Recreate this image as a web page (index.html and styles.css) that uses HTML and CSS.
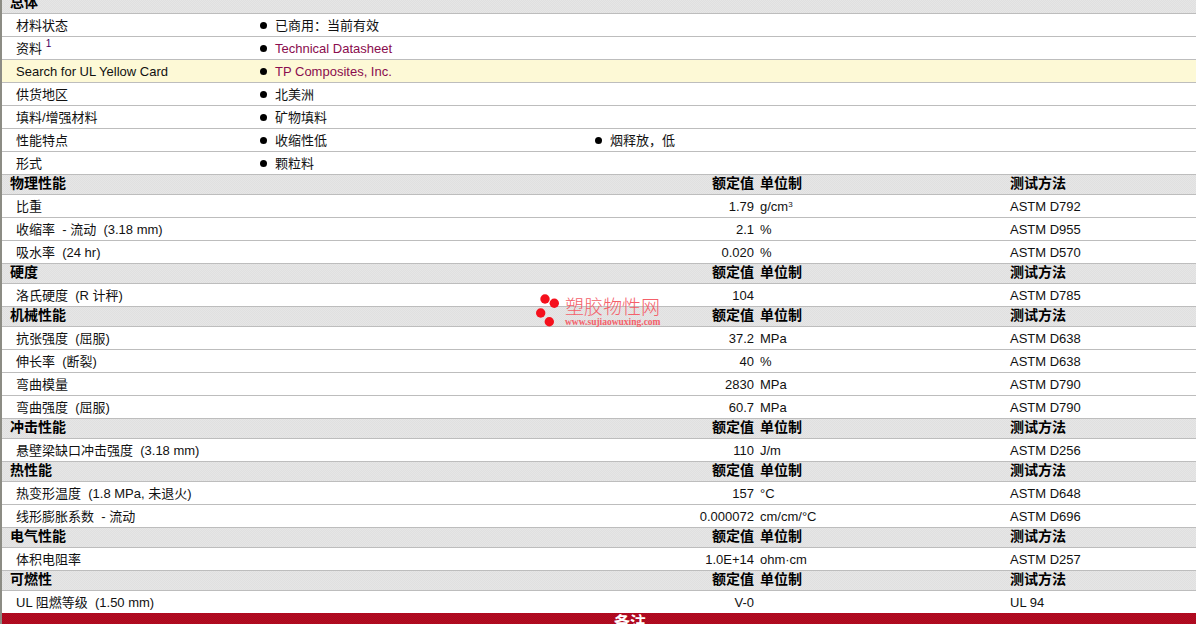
FILE: index.html
```html
<!DOCTYPE html>
<html lang="zh">
<head>
<meta charset="utf-8">
<title>塑胶物性</title>
<link rel="stylesheet" href="styles.css">
</head>
<body>
<main class="sheet">
  <div class="head head-first"><b class="title">总体</b></div>
  <div class="row info"><span class="label">材料状态</span><span class="item"><i class="dot"></i>已商用：当前有效</span></div>
  <div class="row info"><span class="label">资料 <sup class="note">1</sup></span><span class="item link"><i class="dot"></i>Technical Datasheet</span></div>
  <div class="row info yellow"><span class="label">Search for UL Yellow Card</span><span class="item link"><i class="dot"></i>TP Composites, Inc.</span></div>
  <div class="row info"><span class="label">供货地区</span><span class="item"><i class="dot"></i>北美洲</span></div>
  <div class="row info"><span class="label">填料/增强材料</span><span class="item"><i class="dot"></i>矿物填料</span></div>
  <div class="row info"><span class="label">性能特点</span><span class="item"><i class="dot"></i>收缩性低</span><span class="item"><i class="dot"></i>烟释放，低</span></div>
  <div class="row info"><span class="label">形式</span><span class="item"><i class="dot"></i>颗粒料</span></div>

  <div class="head"><b class="title">物理性能</b><b class="val">额定值</b><b>单位制</b><b>测试方法</b></div>
  <div class="row data"><span class="label">比重</span><span class="val">1.79</span><span>g/cm<sup class="cube">3</sup></span><span>ASTM D792</span></div>
  <div class="row data"><span class="label">收缩率 &nbsp;- 流动 &nbsp;(3.18 mm)</span><span class="val">2.1</span><span>%</span><span>ASTM D955</span></div>
  <div class="row data"><span class="label">吸水率 &nbsp;(24 hr)</span><span class="val">0.020</span><span>%</span><span>ASTM D570</span></div>

  <div class="head"><b class="title">硬度</b><b class="val">额定值</b><b>单位制</b><b>测试方法</b></div>
  <div class="row data"><span class="label">洛氏硬度 &nbsp;(R 计秤)</span><span class="val">104</span><span></span><span>ASTM D785</span></div>

  <div class="head"><b class="title">机械性能</b><b class="val">额定值</b><b>单位制</b><b>测试方法</b></div>
  <div class="row data"><span class="label">抗张强度 &nbsp;(屈服)</span><span class="val">37.2</span><span>MPa</span><span>ASTM D638</span></div>
  <div class="row data"><span class="label">伸长率 &nbsp;(断裂)</span><span class="val">40</span><span>%</span><span>ASTM D638</span></div>
  <div class="row data"><span class="label">弯曲模量</span><span class="val">2830</span><span>MPa</span><span>ASTM D790</span></div>
  <div class="row data"><span class="label">弯曲强度 &nbsp;(屈服)</span><span class="val">60.7</span><span>MPa</span><span>ASTM D790</span></div>

  <div class="head"><b class="title">冲击性能</b><b class="val">额定值</b><b>单位制</b><b>测试方法</b></div>
  <div class="row data"><span class="label">悬壁梁缺口冲击强度 &nbsp;(3.18 mm)</span><span class="val">110</span><span>J/m</span><span>ASTM D256</span></div>

  <div class="head"><b class="title">热性能</b><b class="val">额定值</b><b>单位制</b><b>测试方法</b></div>
  <div class="row data"><span class="label">热变形温度 &nbsp;(1.8 MPa, 未退火)</span><span class="val">157</span><span>°C</span><span>ASTM D648</span></div>
  <div class="row data"><span class="label">线形膨胀系数 &nbsp;- 流动</span><span class="val">0.000072</span><span>cm/cm/°C</span><span>ASTM D696</span></div>

  <div class="head"><b class="title">电气性能</b><b class="val">额定值</b><b>单位制</b><b>测试方法</b></div>
  <div class="row data"><span class="label">体积电阻率</span><span class="val">1.0E+14</span><span>ohm·cm</span><span>ASTM D257</span></div>

  <div class="head"><b class="title">可燃性</b><b class="val">额定值</b><b>单位制</b><b>测试方法</b></div>
  <div class="row data last"><span class="label">UL 阻燃等级 &nbsp;(1.50 mm)</span><span class="val">V-0</span><span></span><span>UL 94</span></div>

  <div class="footer-band"><b>备注</b></div>

  <div class="watermark">
    <svg class="wm-dots" width="26" height="36" viewBox="0 0 26 36"><circle cx="11" cy="6" r="4.7"/><circle cx="20.3" cy="10.3" r="4.7"/><circle cx="6.7" cy="20" r="4.7"/><circle cx="15.3" cy="28.7" r="4.7"/></svg>
    <div class="wm-text"><span class="wm-name">塑胶物性网</span><span class="wm-url">www.sujiaowuxing.com</span></div>
  </div>
</main>
</body>
</html>
```
FILE: styles.css
```css
* { box-sizing: border-box; }
html, body { margin: 0; height: 100%; overflow: hidden; background: #fff; }
.sheet {
  position: relative;
  height: 624px;
  overflow: hidden;
  border-left: 2px solid #8c8c84;
  font-family: "Liberation Sans", "Noto Sans CJK SC", sans-serif;
  font-size: 13px;
  line-height: 15px;
  color: #111;
}
.row, .head {
  display: grid;
  align-items: center;
  border-bottom: 1px solid #bdbdbd;
}
.row { height: 23px; }
.head {
  height: 20px;
  padding-bottom: 3px;
  background-color: #e3e3e3;
  background-image: repeating-conic-gradient(#e0e0e0 0 25%, #e6e6e6 0 50%);
  background-size: 2px 2px;
  grid-template-columns: 598px 154px 256px 1fr;
  font-size: 14px;
  line-height: 15px;
  color: #000;
}
.head-first { margin-top: -6px; }
.head b:nth-child(3) { padding-left: 6px; }
.title { padding-left: 8px; }
.data { grid-template-columns: 598px 154px 256px 1fr; }
.data > span:nth-child(3) { padding-left: 6px; }
.info { grid-template-columns: 258px 335px 1fr; }
.yellow { background: #fdf9d6; }
.label { padding-left: 14px; }
.val { text-align: right; }
.item { display: flex; align-items: center; gap: 8px; }
.dot { width: 7px; height: 7px; border-radius: 50%; background: #000; flex: none; }
.link { color: #8a0d4e; }
.note { font-size: 10px; line-height: 0; vertical-align: 6px; color: #400060; }
.cube { font-size: 8px; line-height: 0; vertical-align: 4px; }
.last { height: 22px; border-bottom: 0; }
.footer-band {
  height: 24px;
  background-color: #b00a20;
  background-image: repeating-conic-gradient(#b40c22 0 25%, #aa081e 0 50%);
  background-size: 2px 2px;
  color: #fff;
  padding-left: 612px;
  font-size: 16px;
  line-height: 20px;
}
.watermark {
  position: absolute;
  left: 532px;
  top: 293px;
  display: flex;
  gap: 5px;
  pointer-events: none;
}
.wm-dots { fill: #f5101c; }
.wm-text { display: flex; flex-direction: column; color: #f4606a; }
.wm-name { font-size: 19px; line-height: 20px; margin-top: 5px; font-weight: 300; }
.wm-url { font-family: "Liberation Serif", serif; font-size: 9.5px; line-height: 9px; font-weight: bold; }
```
